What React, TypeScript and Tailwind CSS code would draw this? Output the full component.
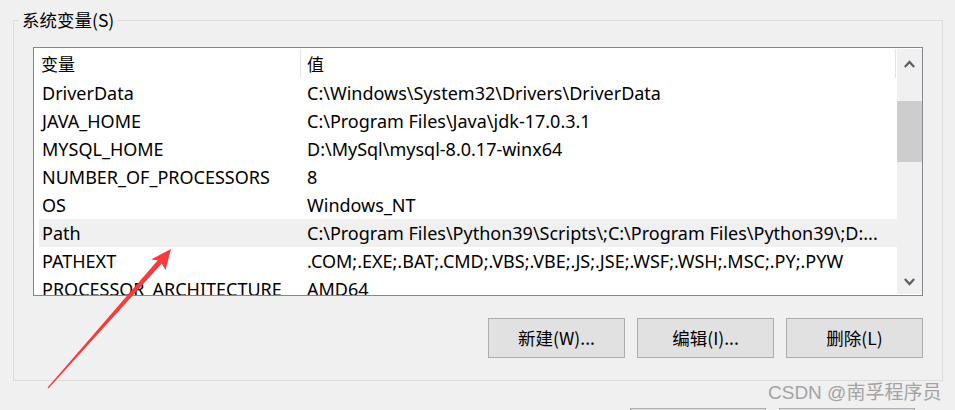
import React from "react";

const rows: [string, string][] = [
  ["DriverData", "C:\\Windows\\System32\\Drivers\\DriverData"],
  ["JAVA_HOME", "C:\\Program Files\\Java\\jdk-17.0.3.1"],
  ["MYSQL_HOME", "D:\\MySql\\mysql-8.0.17-winx64"],
  ["NUMBER_OF_PROCESSORS", "8"],
  ["OS", "Windows_NT"],
  ["Path", "C:\\Program Files\\Python39\\Scripts\\;C:\\Program Files\\Python39\\;D:..."],
  ["PATHEXT", ".COM;.EXE;.BAT;.CMD;.VBS;.VBE;.JS;.JSE;.WSF;.WSH;.MSC;.PY;.PYW"],
  ["PROCESSOR_ARCHITECTURE", "AMD64"],
];

function Chevron({ up }: { up: boolean }) {
  return (
    <svg width="11" height="8" viewBox="0 0 11 8">
      <polyline
        points={up ? "0.8,7 5.5,2 10.2,7" : "0.8,1 5.5,6 10.2,1"}
        fill="none"
        stroke="#606060"
        strokeWidth="2.3"
      />
    </svg>
  );
}

export default function App() {
  return (
    <div className="relative w-[955px] h-[410px] overflow-hidden bg-[#f0f0f0] text-[17px] text-black font-['Noto_Sans','Noto_Sans_CJK_SC',sans-serif]">
      <div className="relative ml-[13px] mt-[20px] w-[930px] h-[361px] border border-[#dcdcdc] pl-[19px] pt-[26px]">
        <span className="absolute left-[5px] top-[-12px] px-[3px] bg-[#f0f0f0] text-[17.5px] leading-[22px] font-['Noto_Sans_CJK_SC',sans-serif]">
          系统变量(S)
        </span>

        <div className="flex w-[890px] h-[249px] border border-[#828790] bg-white overflow-hidden">
          <div className="flex-1 min-w-0 flex flex-col overflow-hidden">
            <div className="flex h-[31px] shrink-0 items-center">
              <div className="w-[266px] pl-[7px] leading-[22px] font-['Noto_Sans_CJK_SC',sans-serif]">变量</div>
              <div className="w-px h-[29px] bg-[#e5e5e5]" />
              <div className="flex-1 pl-[6px] leading-[22px] font-['Noto_Sans_CJK_SC',sans-serif]">值</div>
              <div className="w-px h-[29px] bg-[#e5e5e5] mr-[1px]" />
            </div>
            {rows.map(([k, v]) => (
              <div
                key={k}
                className={`flex shrink-0 h-[28px] items-center ml-[5px] whitespace-nowrap text-[18px] ${
                  k === "Path" ? "bg-[#f0f0f0]" : ""
                }`}
              >
                <div className="w-[265px] pl-[3px] overflow-hidden">{k}</div>
                <div className="flex-1 min-w-0 pl-[3px] overflow-hidden">{v}</div>
              </div>
            ))}
          </div>
          <div className="w-[25px] shrink-0 my-[1px] bg-[#f0f0f0] flex flex-col">
            <div className="h-[30px] flex items-center justify-center">
              <Chevron up />
            </div>
            <div className="mt-[22px] h-[61px] bg-[#cdcdcd]" />
            <div className="flex-1" />
            <div className="h-[24px] flex items-center justify-center">
              <Chevron up={false} />
            </div>
          </div>
        </div>

        <div className="flex w-[890px] justify-end gap-[12px] mt-[22px]">
          {["新建(W)...", "编辑(I)...", "删除(L)"].map((t) => (
            <div
              key={t}
              className="w-[137px] h-[40px] flex items-center justify-center border border-[#adadad] bg-[#e1e1e1] text-[17.5px] font-['Noto_Sans_CJK_SC',sans-serif]"
            >
              {t}
            </div>
          ))}
        </div>
      </div>

      <div className="flex justify-end gap-[13px] pr-[40px] mt-[27px]">
        <div className="w-[136px] h-[40px] border border-[#adadad] bg-[#e1e1e1]" />
        <div className="w-[136px] h-[40px] border border-[#adadad] bg-[#e1e1e1]" />
      </div>

      <div className="absolute left-[768px] top-[380px] text-[19px] leading-[26px] text-[#a3a3a3] font-['Liberation_Sans','Noto_Sans_CJK_SC',sans-serif] whitespace-nowrap">
        CSDN @南孚程序员
      </div>

      <svg className="absolute left-0 top-0 pointer-events-none" width="955" height="410" viewBox="0 0 955 410">
        <polygon
          points="171,249 165.5,270 161.8,263.6 48.4,388.4 47.6,387.6 157.8,260.2 151,259.5"
          fill="#f53b3b"
        />
      </svg>
    </div>
  );
}
